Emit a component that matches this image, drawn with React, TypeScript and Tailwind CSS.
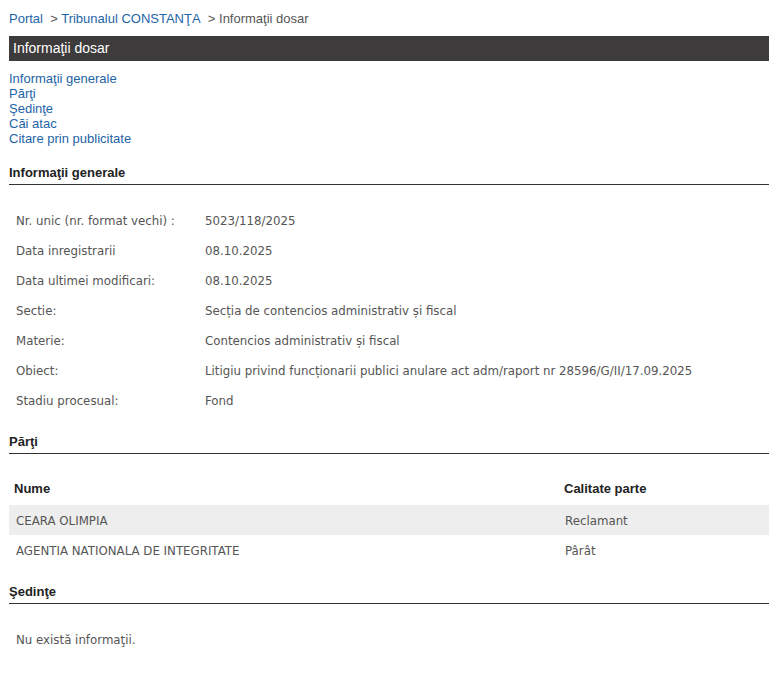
const fields: [string, string][] = [
  ["Nr. unic (nr. format vechi) :", "5023/118/2025"],
  ["Data inregistrarii", "08.10.2025"],
  ["Data ultimei modificari:", "08.10.2025"],
  ["Sectie:", "Secția de contencios administrativ și fiscal"],
  ["Materie:", "Contencios administrativ și fiscal"],
  ["Obiect:", "Litigiu privind funcționarii publici anulare act adm/raport nr 28596/G/II/17.09.2025"],
  ["Stadiu procesual:", "Fond"],
];

const parti = [
  { nume: "CEARA OLIMPIA", calitate: "Reclamant" },
  { nume: "AGENTIA NATIONALA DE INTEGRITATE", calitate: "Pârât" },
];

const links = ["Informaţii generale", "Părţi", "Şedinţe", "Căi atac", "Citare prin publicitate"];

const data = "font-['DejaVu_Sans',sans-serif] text-[11.8px] text-[#555]";

function SectionTitle({ children, className = "" }: { children: React.ReactNode; className?: string }) {
  return (
    <h3 className={`border-b border-[#333] pb-[3px] text-[13px] font-bold leading-[16px] text-[#222] ${className}`}>
      {children}
    </h3>
  );
}

export default function App() {
  return (
    <div className="min-h-screen bg-white pl-[9px] pr-[7px] pt-[10px] font-['Liberation_Sans',Arial,sans-serif]">
      <nav className="pt-[1px] text-[13px] leading-[15px] text-[#555]">
        <a className="text-[#1e64a6]">Portal</a>
        <span>&nbsp; &gt; </span>
        <a className="text-[#1e64a6]">Tribunalul CONSTANŢA</a>
        <span>&nbsp; &gt; Informaţii dosar</span>
      </nav>

      <div className="mt-[10px] h-[25px] bg-[#3d3b3b] pl-[4px] text-[14px] leading-[25px] text-white">
        Informaţii dosar
      </div>

      <ul className="mt-[10px] text-[13px] leading-[15px] text-[#1e64a6]">
        {links.map((l) => (
          <li key={l}>
            <a>{l}</a>
          </li>
        ))}
      </ul>

      <SectionTitle className="mt-[19px]">Informaţii generale</SectionTitle>
      <dl className={`mt-[20px] ${data}`}>
        {fields.map(([k, v]) => (
          <div key={k} className="flex h-[30px] items-center pl-[7px] pt-[3px]">
            <dt className="w-[189px] shrink-0">{k}</dt>
            <dd>{v}</dd>
          </div>
        ))}
      </dl>

      <SectionTitle className="mt-[19px]">Părţi</SectionTitle>
      <div className="mt-[17px]">
        <div className="grid h-[34px] grid-cols-[548px_1fr] items-center pt-[2px] text-[13px] font-bold text-[#222]">
          <div className="pl-[5px]">Nume</div>
          <div className="pl-[7px]">Calitate parte</div>
        </div>
        {parti.map((p, i) => (
          <div
            key={p.nume}
            className={`grid h-[30px] grid-cols-[548px_1fr] items-center pt-[3px] ${data} ${i % 2 === 0 ? "bg-[#eeeeee]" : ""}`}
          >
            <div className="pl-[7px]">{p.nume}</div>
            <div className="pl-[8px]">{p.calitate}</div>
          </div>
        ))}
      </div>

      <SectionTitle className="mt-[19px]">Şedinţe</SectionTitle>
      <div className={`mt-[20px] flex h-[30px] items-center pl-[7px] pt-[3px] ${data}`}>Nu există informaţii.</div>
    </div>
  );
}
